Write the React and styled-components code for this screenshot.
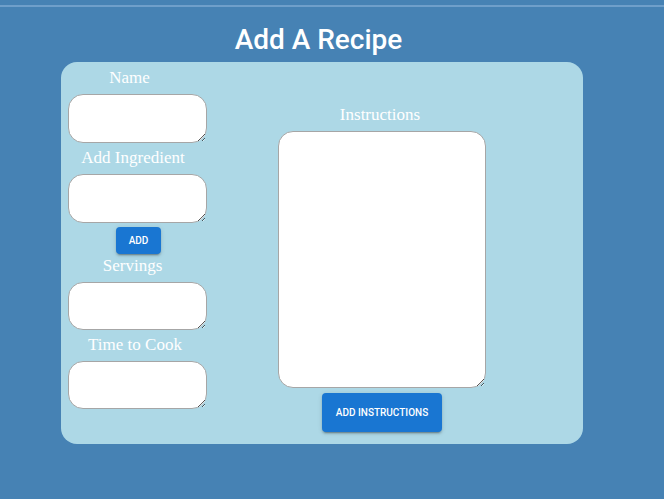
import React from "react";
import styled, { createGlobalStyle } from "styled-components";

const Global = createGlobalStyle`
  html, body {
    margin: 0;
    padding: 0;
    background: #4682b4;
    height: 100%;
    overflow: hidden;
  }
  * { box-sizing: border-box; }
`;

const Page = styled.div`
  min-height: 499px;
  padding-top: 5px;
  background: #4682b4;
`;

const TopRule = styled.div`
  height: 2px;
  background: #6f9fca;
`;

const Title = styled.h1`
  margin: 0;
  padding: 16px 27px 0 0;
  height: 55px;
  text-align: center;
  font-family: Roboto, "Liberation Sans", sans-serif;
  font-weight: 500;
  font-size: 28px;
  line-height: 34px;
  color: #ffffff;
`;

const Card = styled.div`
  margin-left: 61px;
  width: 522px;
  height: 382px;
  background: #add8e6;
  border-radius: 16px;
  padding: 6px 0 0 7px;
  display: flex;
  gap: 71px;
`;

const Column = styled.div`
  width: ${(p) => p.$width}px;
  padding-top: ${(p) => p.$top || 0}px;
  display: flex;
  flex-direction: column;
  align-items: center;
`;

const Label = styled.label`
  display: block;
  width: 100%;
  height: 20px;
  margin: ${(p) => p.$mt || 0}px 0 6px;
  padding-right: ${(p) => p.$shift || 0}px;
  text-align: center;
  font-family: "Liberation Serif", "Times New Roman", serif;
  font-size: 17px;
  line-height: 20px;
  color: #ffffff;
`;

const Field = styled.textarea`
  display: block;
  width: 100%;
  height: ${(p) => p.$height}px;
  margin: 0;
  padding: 2px;
  background: #ffffff;
  border: 1px solid #a6a6a6;
  border-radius: 15px;
  font-family: "Liberation Mono", monospace;
  font-size: 13px;
  outline: none;
`;

const Button = styled.button`
  display: block;
  margin-top: ${(p) => p.$mt || 0}px;
  margin-left: ${(p) => p.$ml || 0}px;
  height: ${(p) => p.$h}px;
  padding: 0 ${(p) => p.$px}px;
  border: none;
  border-radius: 4px;
  background: #1976d2;
  color: #ffffff;
  font-family: Roboto, "Liberation Sans", sans-serif;
  font-weight: 500;
  font-size: 10px;
  letter-spacing: 0;
  text-transform: uppercase;
  box-shadow: 0px 3px 1px -2px rgba(0,0,0,0.2), 0px 2px 2px 0px rgba(0,0,0,0.14), 0px 1px 5px 0px rgba(0,0,0,0.12);
  cursor: pointer;
`;

export default function App() {
  return (
    <>
      <Global />
      <Page>
        <TopRule />
        <Title>Add A Recipe</Title>
        <Card>
          <Column $width={139}>
            <Label $shift={16}>Name</Label>
            <Field $height={49} />
            <Label $mt={5} $shift={9}>Add Ingredient</Label>
            <Field $height={49} />
            <Button $mt={4} $ml={2} $h={27} $px={13}>Add</Button>
            <Label $mt={2} $shift={10}>Servings</Label>
            <Field $height={48} />
            <Label $mt={5} $shift={5}>Time to Cook</Label>
            <Field $height={48} />
          </Column>
          <Column $width={208} $top={37}>
            <Label $shift={4}>Instructions</Label>
            <Field $height={257} />
            <Button $mt={5} $h={39} $px={14}>Add Instructions</Button>
          </Column>
        </Card>
      </Page>
    </>
  );
}
